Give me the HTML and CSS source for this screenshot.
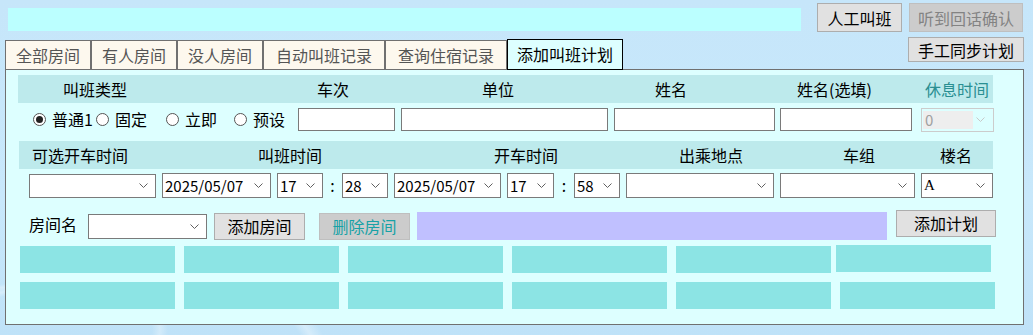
FILE: index.html
```html
<!DOCTYPE html>
<html lang="zh-CN">
<head>
<meta charset="utf-8">
<title>添加叫班计划</title>
<link rel="stylesheet" href="styles.css">
</head>
<body>
<div class="page">
  <header class="top">
    <div class="top-left">
      <div class="status-bar"></div>
      <nav class="tabs">
        <div class="tab t-s">全部房间</div>
        <div class="tab t-s">有人房间</div>
        <div class="tab t-s">没人房间</div>
        <div class="tab t-l">自动叫班记录</div>
        <div class="tab t-l">查询住宿记录</div>
        <div class="tab active">添加叫班计划</div>
      </nav>
    </div>
    <div class="top-right">
      <div class="btn-row">
        <button class="btn b-call">人工叫班</button>
        <button class="btn dis b-confirm">听到回话确认</button>
      </div>
      <button class="btn b-sync">手工同步计划</button>
    </div>
  </header>

  <section class="panel">
    <div class="hdr hdr1">
      <span>叫班类型</span><span>车次</span><span>单位</span><span>姓名</span><span>姓名(选填)</span><span class="teal">休息时间</span>
    </div>
    <div class="row row1">
      <div class="radios">
        <label class="radio"><span class="dot on"></span>普通1</label>
        <label class="radio"><span class="dot"></span>固定</label>
        <label class="radio"><span class="dot"></span>立即</label>
        <label class="radio"><span class="dot"></span>预设</label>
      </div>
      <div class="input i-train"></div>
      <div class="input i-unit"></div>
      <div class="input i-name"></div>
      <div class="input i-name2"></div>
      <div class="select disabled s-rest"><span class="val">0</span><svg class="chev" width="9" height="5" viewBox="0 0 9 5"><polyline points="0.5,0.5 4.5,4.5 8.5,0.5" fill="none" stroke="#c8c8c8" stroke-width="1"/></svg></div>
    </div>

    <div class="hdr hdr2">
      <span>可选开车时间</span><span>叫班时间</span><span>开车时间</span><span>出乘地点</span><span>车组</span><span>楼名</span>
    </div>
    <div class="row row2">
      <div class="select s-opt"><span class="val"></span><svg class="chev" width="9" height="5" viewBox="0 0 9 5"><polyline points="0.5,0.5 4.5,4.5 8.5,0.5" fill="none" stroke="#606060" stroke-width="1"/></svg></div>
      <div class="select s-date"><span class="val">2025/05/07</span><svg class="chev" width="9" height="5" viewBox="0 0 9 5"><polyline points="0.5,0.5 4.5,4.5 8.5,0.5" fill="none" stroke="#606060" stroke-width="1"/></svg></div>
      <div class="select s-num"><span class="val">17</span><svg class="chev" width="9" height="5" viewBox="0 0 9 5"><polyline points="0.5,0.5 4.5,4.5 8.5,0.5" fill="none" stroke="#606060" stroke-width="1"/></svg></div>
      <span class="colon">:</span>
      <div class="select s-num"><span class="val">28</span><svg class="chev" width="9" height="5" viewBox="0 0 9 5"><polyline points="0.5,0.5 4.5,4.5 8.5,0.5" fill="none" stroke="#606060" stroke-width="1"/></svg></div>
      <div class="select s-date2"><span class="val">2025/05/07</span><svg class="chev" width="9" height="5" viewBox="0 0 9 5"><polyline points="0.5,0.5 4.5,4.5 8.5,0.5" fill="none" stroke="#606060" stroke-width="1"/></svg></div>
      <div class="select s-num s-num2"><span class="val">17</span><svg class="chev" width="9" height="5" viewBox="0 0 9 5"><polyline points="0.5,0.5 4.5,4.5 8.5,0.5" fill="none" stroke="#606060" stroke-width="1"/></svg></div>
      <span class="colon colon2">:</span>
      <div class="select s-num"><span class="val">58</span><svg class="chev" width="9" height="5" viewBox="0 0 9 5"><polyline points="0.5,0.5 4.5,4.5 8.5,0.5" fill="none" stroke="#606060" stroke-width="1"/></svg></div>
      <div class="select s-place"><span class="val"></span><svg class="chev" width="9" height="5" viewBox="0 0 9 5"><polyline points="0.5,0.5 4.5,4.5 8.5,0.5" fill="none" stroke="#606060" stroke-width="1"/></svg></div>
      <div class="select s-group"><span class="val"></span><svg class="chev" width="9" height="5" viewBox="0 0 9 5"><polyline points="0.5,0.5 4.5,4.5 8.5,0.5" fill="none" stroke="#606060" stroke-width="1"/></svg></div>
      <div class="select s-bld"><span class="val serif">A</span><svg class="chev" width="9" height="5" viewBox="0 0 9 5"><polyline points="0.5,0.5 4.5,4.5 8.5,0.5" fill="none" stroke="#606060" stroke-width="1"/></svg></div>
    </div>

    <div class="row row3">
      <span class="room-label">房间名</span>
      <div class="select s-room"><span class="val"></span><svg class="chev" width="9" height="5" viewBox="0 0 9 5"><polyline points="0.5,0.5 4.5,4.5 8.5,0.5" fill="none" stroke="#606060" stroke-width="1"/></svg></div>
      <button class="btn b-add-room">添加房间</button>
      <button class="btn dis teal-text b-del-room">删除房间</button>
      <div class="room-bar"></div>
      <button class="btn b-add-plan">添加计划</button>
    </div>

    <div class="cells cells-a">
      <div class="cell"></div><div class="cell"></div><div class="cell"></div><div class="cell"></div><div class="cell"></div><div class="cell shift"></div>
    </div>
    <div class="cells cells-b">
      <div class="cell"></div><div class="cell"></div><div class="cell"></div><div class="cell"></div><div class="cell"></div><div class="cell"></div>
    </div>
  </section>
</div>
</body>
</html>
```

FILE: styles.css
```css
* { box-sizing: border-box; }

html, body {
  margin: 0;
  padding: 0;
}

body {
  width: 1033px;
  height: 335px;
  overflow: hidden;
  font-family: "Noto Sans CJK SC", "Noto Sans", sans-serif;
  font-size: 16px;
  color: #000;
  background:
    radial-gradient(ellipse 260px 90px at 120px 345px, transparent 70%, rgba(255,255,255,0.35) 74%, transparent 79%),
    radial-gradient(ellipse 160px 60px at 40px 330px, transparent 70%, rgba(255,255,255,0.3) 75%, transparent 80%),
    linear-gradient(180deg, #c6e6fa 0%, #c8e8fb 60%, #bfe2f8 100%);
}

.page {
  width: 1033px;
  height: 335px;
}

/* ---------- top ---------- */
.top {
  display: flex;
  height: 70px;
}

.top-left {
  padding: 8px 0 0 5px;
}

.status-bar {
  margin-left: 3px;
  width: 793px;
  height: 23px;
  background: #bbffff;
}

.tabs {
  position: relative;
  z-index: 1;
  display: flex;
  align-items: flex-end;
  margin-top: 8px;
  height: 31px;
}

.tab {
  height: 30px;
  line-height: 28px;
  text-align: center;
  border: 1px solid #707070;
  background: #fdf8ee;
  color: #555;
  white-space: nowrap;
}

.t-s { width: 86px; }
.t-l { width: 122px; }

.tab.active {
  width: 116px;
  height: 31px;
  line-height: 29px;
  border-color: #000;
  background: #ddffff;
  color: #000;
}

.top-right {
  margin-left: auto;
  padding: 3px 9px 0 0;
  display: flex;
  flex-direction: column;
  align-items: flex-end;
  gap: 5px;
}

.btn-row {
  display: flex;
  gap: 7px;
  margin-right: 1px;
}

.btn {
  font-family: "Noto Sans CJK SC", "Noto Sans", sans-serif;
  font-size: 16px;
  line-height: 1;
  padding: 0;
  margin: 0;
  color: #000;
  background: #e1e1e1;
  border: 1px solid #adadad;
  border-radius: 0;
  white-space: nowrap;
  flex: none;
}

.btn.dis {
  background: #cccccc;
  border-color: #bfbfbf;
  color: #838383;
}

.btn.teal-text { color: #17a2a6; }

.b-call { width: 85px; height: 29px; }
.b-confirm { width: 114px; height: 29px; }
.b-sync { width: 116px; height: 25px; }

/* ---------- panel ---------- */
.panel {
  margin: -1px 9px 0 5px;
  height: 256px;
  background: #ddffff;
  border: 1px solid #707070;
  padding: 5px 0 0 12px;
}

.hdr {
  width: 975px;
  height: 28px;
  line-height: 28px;
  background: #bdeaec;
  display: grid;
  white-space: nowrap;
}

.hdr1 {
  grid-template-columns: 254px 165px 173px 142px 128px 1fr;
  padding-left: 45px;
}

.hdr2 {
  margin-top: 9px;
  margin-left: 1px;
  width: 974px;
  grid-template-columns: 226px 236px 185px 164px 97px 1fr;
  padding-left: 13px;
}

.teal { color: #2a8f92; }

.row {
  display: flex;
  align-items: center;
}

.row > * { flex: none; }

/* row 1 */
.row1 {
  margin-top: 4px;
  height: 25px;
  padding-left: 15px;
  gap: 6px;
}

.radios {
  width: 259px;
  display: grid;
  grid-template-columns: 63px 70px 68px 1fr;
  align-items: center;
}

.radio {
  display: flex;
  align-items: center;
  gap: 6px;
  line-height: 1.2;
  white-space: nowrap;
}

.dot {
  width: 13px;
  height: 13px;
  border-radius: 50%;
  border: 1px solid #555;
  background: #fff;
  display: flex;
  align-items: center;
  justify-content: center;
  flex: none;
}

.dot.on::after {
  content: "";
  width: 7px;
  height: 7px;
  border-radius: 50%;
  background: #222;
}

.input {
  height: 23px;
  background: #fff;
  border: 1px solid #7a7a7a;
}

.i-train { width: 97px; }
.i-unit { width: 207px; }
.i-name { width: 161px; }
.i-name2 { width: 132px; margin-left: -1px; }

.select {
  height: 25px;
  background: #fff;
  border: 1px solid #7a7a7a;
  display: flex;
  align-items: center;
  padding: 0 7px 0 2px;
  font-size: 15px;
  line-height: 1.3;
}

.select .val {
  flex: 1;
  min-width: 0;
  white-space: nowrap;
}

.select .chev { flex: none; }

.select.disabled {
  border-color: #cccccc;
  background: transparent;
  padding: 2px 8px 2px 1px;
}

.select.disabled .val {
  flex: none;
  width: 50px;
  height: 100%;
  background: #eeeeee;
  color: #a0a0a0;
  display: flex;
  align-items: center;
  padding-left: 2px;
  margin-right: auto;
}

.s-rest { width: 73px; height: 24px; margin-left: 3px; }

.serif { font-family: "Liberation Serif", serif; }

/* row 2 */
.row2 {
  margin-top: 4px;
  padding-left: 11px;
  gap: 6px;
}

.s-opt { width: 127px; height: 24px; }
.s-date { width: 109px; }
.s-num { width: 46px; }
.s-num2 { width: 47px; }
.s-date2 { width: 107px; }
.s-place { width: 148px; }
.s-group { width: 135px; }
.s-bld { width: 72px; }

.colon {
  width: 7px;
  text-align: center;
  font-size: 16px;
  line-height: 1.2;
}

.colon2 { width: 8px; }

/* row 3 */
.row3 {
  margin-top: 11px;
  height: 31px;
  padding-left: 11px;
}

.room-label {
  width: 48px;
  line-height: 1.2;
  margin-right: 11px;
  white-space: nowrap;
}

.s-room { width: 119px; margin-top: 4px; }

.b-add-room { width: 91px; height: 27px; margin-left: 7px; margin-top: 3px; }
.b-del-room { width: 91px; height: 27px; margin-left: 14px; margin-top: 3px; }

.room-bar {
  width: 470px;
  height: 28px;
  margin-left: 7px;
  margin-top: 3px;
  background: #c0c0ff;
}

.b-add-plan { width: 100px; height: 27px; margin-left: 9px; margin-top: -3px; }

/* grid of cells */
.cells {
  display: flex;
  gap: 9px;
  padding-left: 2px;
}

.cell {
  flex: none;
  width: 155px;
  height: 27px;
  background: #8ce4e4;
}

.cells-a { margin-top: 6px; }
.cells-b { margin-top: 9px; }

.cell.shift {
  margin-left: -4px;
  margin-top: -1px;
}
```
